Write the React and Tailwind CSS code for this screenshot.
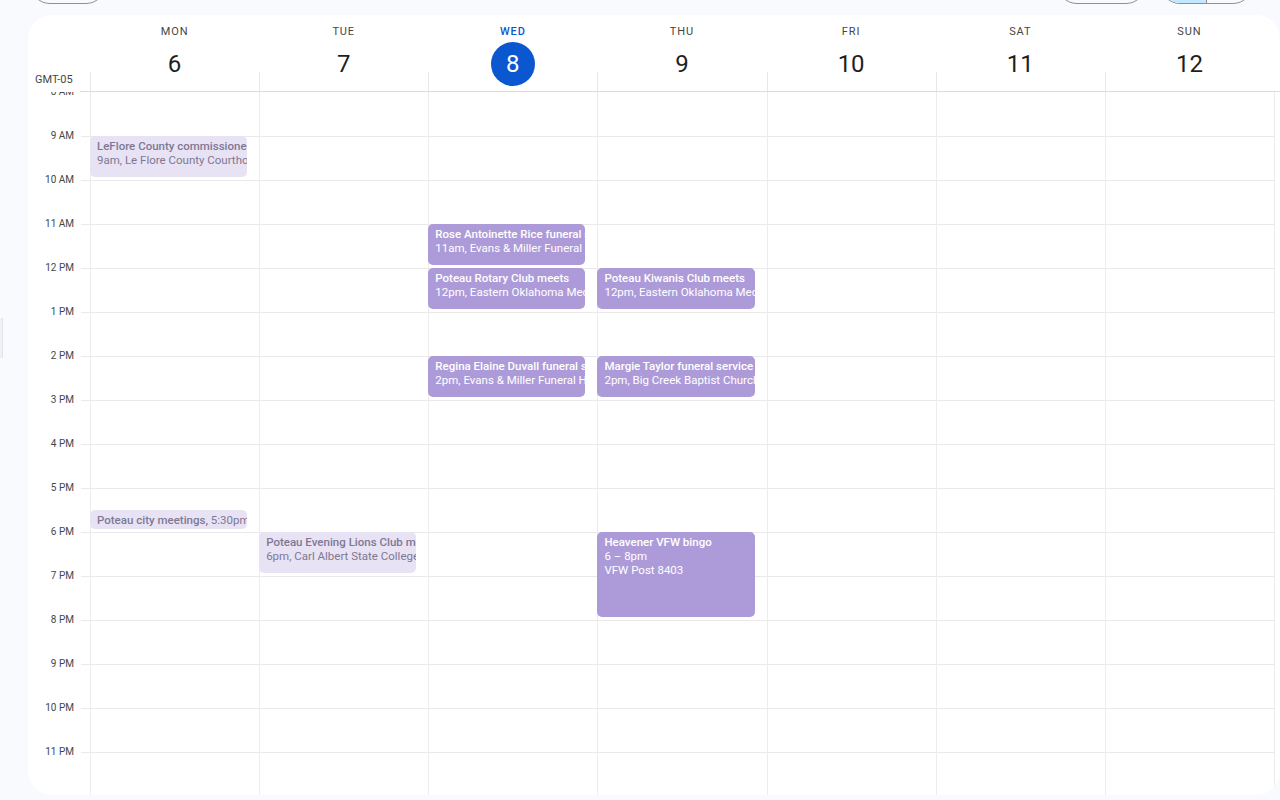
const days = [
  { label: "MON", num: "6" },
  { label: "TUE", num: "7" },
  { label: "WED", num: "8", today: true },
  { label: "THU", num: "9" },
  { label: "FRI", num: "10" },
  { label: "SAT", num: "11" },
  { label: "SUN", num: "12" },
];

const hours = [
  "8 AM", "9 AM", "10 AM", "11 AM", "12 PM", "1 PM", "2 PM", "3 PM",
  "4 PM", "5 PM", "6 PM", "7 PM", "8 PM", "9 PM", "10 PM", "11 PM",
];

const HOUR = 44;

const events = [
  { day: 0, start: 9, dur: 1, past: true, title: "LeFlore County commissioners meeting", lines: ["9am, Le Flore County Courthouse"] },
  { day: 0, start: 17.5, dur: 0.5, past: true, inline: true, title: "Poteau city meetings,", lines: ["5:30pm"] },
  { day: 1, start: 18, dur: 1, past: true, title: "Poteau Evening Lions Club meets", lines: ["6pm, Carl Albert State College"] },
  { day: 2, start: 11, dur: 1, title: "Rose Antoinette Rice funeral service", lines: ["11am, Evans & Miller Funeral Home"] },
  { day: 2, start: 12, dur: 1, title: "Poteau Rotary Club meets", lines: ["12pm, Eastern Oklahoma Medical Center"] },
  { day: 2, start: 14, dur: 1, title: "Regina Elaine Duvall funeral service", lines: ["2pm, Evans & Miller Funeral Home"] },
  { day: 3, start: 12, dur: 1, title: "Poteau Kiwanis Club meets", lines: ["12pm, Eastern Oklahoma Medical Center"] },
  { day: 3, start: 14, dur: 1, title: "Margie Taylor funeral service", lines: ["2pm, Big Creek Baptist Church"] },
  { day: 3, start: 18, dur: 2, title: "Heavener VFW bingo", lines: ["6 – 8pm", "VFW Post 8403"] },
];

function Event({ ev }) {
  const colors = ev.past
    ? "bg-[#e8e2f5] text-[#7f7893]"
    : "bg-[#ad9bd9] text-white";
  return (
    <div
      className={`absolute -left-px right-[12px] rounded-[5px] overflow-hidden whitespace-nowrap px-[7px] pt-[3px] text-[11.5px] leading-[14px] ${colors}`}
      style={{ top: (ev.start - 8) * HOUR, height: ev.dur * HOUR - 3 }}
    >
      {ev.inline ? (
        <div>
          <span className="font-medium">{ev.title}</span> {ev.lines[0]}
        </div>
      ) : (
        <>
          <div className="font-medium">{ev.title}</div>
          {ev.lines.map((l) => (
            <div key={l}>{l}</div>
          ))}
        </>
      )}
    </div>
  );
}

export default function App() {
  return (
    <div
      className="w-[1280px] h-[800px] overflow-hidden bg-[#f8fafd] text-[#1f1f1f]"
      style={{ fontFamily: "Roboto, 'Open Sans', Arial, sans-serif" }}
    >
      {/* toolbar, mostly scrolled off the top */}
      <div className="flex h-[40px] -mt-[36px]">
        <div className="ml-[30px] w-[76px] h-[40px] rounded-full border border-[#8e918f]" />
        <div className="ml-auto w-[89px] h-[40px] rounded-full border border-[#8e918f]" />
        <div className="ml-[14px] mr-[27px] w-[93px] h-[40px] rounded-full border border-[#8e918f] overflow-hidden flex">
          <div className="w-[46px] bg-[#c2e7ff] border-r border-[#8e918f]" />
          <div className="flex-1" />
        </div>
      </div>

      <div className="flex mt-[11px]">
        <div className="w-[28px] shrink-0">
          <div className="mt-[303px] h-[40px] w-[3px] bg-[#eef1f6] border-r border-[#e1e4ea]" />
        </div>

        <div className="w-[1252px] h-[780px] bg-white rounded-3xl overflow-hidden flex flex-col">
          {/* header */}
          <div className="flex h-[77px] shrink-0">
            <div className="w-[62px] flex flex-col justify-end">
              <div className="pl-[7px] pb-[5px] text-[11px] leading-[12px] text-[#444746]">GMT-05</div>
              <div className="ml-[52px] h-px bg-[#dadce0]" />
            </div>
            <div className="flex-1 grid grid-cols-7 border-b border-[#dadce0]">
              {days.map((d) => (
                <div key={d.label} className="relative flex flex-col items-center pt-[9px]">
                  <span
                    className={`text-[11px] leading-[16px] tracking-[0.9px] ${d.today ? "text-[#0b57d0] font-medium" : "text-[#444746]"}`}
                  >
                    {d.label}
                  </span>
                  <div
                    className={`mt-[2px] w-[44px] h-[44px] rounded-full flex items-center justify-center text-[24px] ${d.today ? "bg-[#0b57d0] text-white" : "text-[#1f1f1f]"}`}
                  >
                    {d.num}
                  </div>
                  <span className="absolute left-0 bottom-0 h-[19px] w-px bg-[#e6e6e6]" />
                </div>
              ))}
            </div>
            <div className="w-[6px] border-b border-[#dadce0]" />
          </div>

          {/* body */}
          <div className="flex flex-1 overflow-hidden">
            <div className="w-[62px] shrink-0">
              {hours.map((h, i) => (
                <div key={h} className="relative h-[44px]">
                  <span className="absolute right-[16px] top-0 -translate-y-1/2 text-[10px] leading-[12px] text-[#444746]">
                    {h}
                  </span>
                  {i > 0 && <span className="absolute right-0 top-0 w-[9px] h-px bg-[#e9e9e9]" />}
                </div>
              ))}
            </div>
            <div className="flex-1 grid grid-cols-7 border-r border-[#ececec]">
              {days.map((d, di) => (
                <div key={d.label} className="relative border-l border-[#ececec]">
                  {hours.map((h, i) => (
                    <div key={h} className={`h-[44px] ${i > 0 ? "border-t border-[#e9e9e9]" : ""}`} />
                  ))}
                  {events
                    .filter((e) => e.day === di)
                    .map((e) => (
                      <Event key={e.title} ev={e} />
                    ))}
                </div>
              ))}
            </div>
            <div className="w-[5px]" />
          </div>
        </div>
      </div>
    </div>
  );
}
